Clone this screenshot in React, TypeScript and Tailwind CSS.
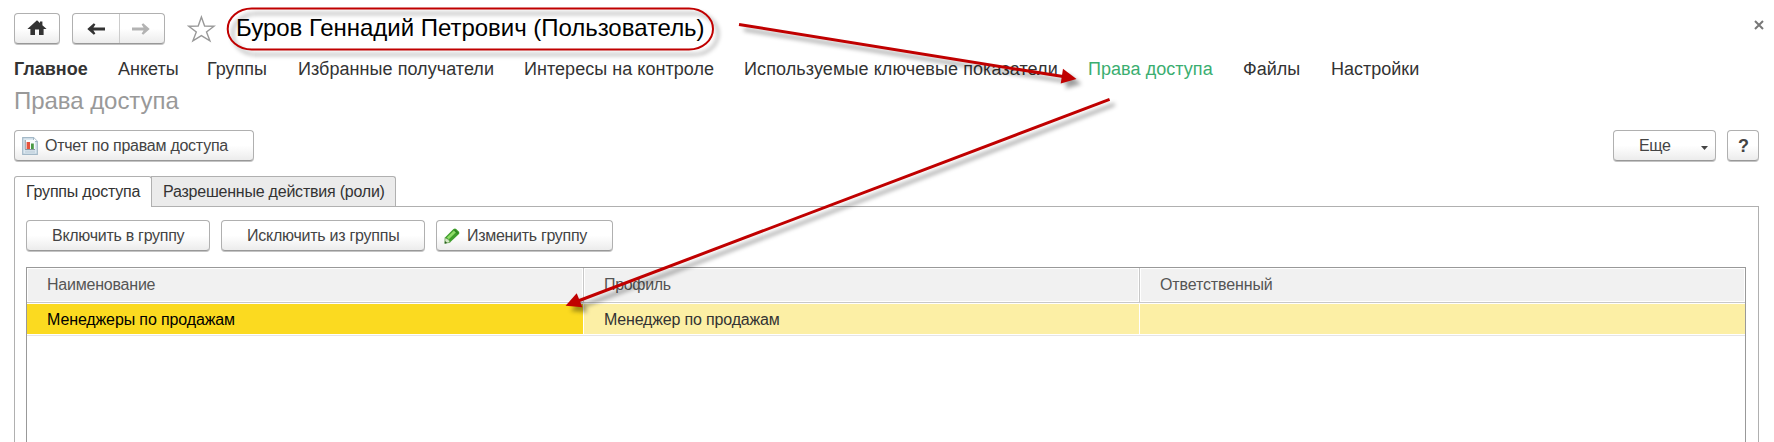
import type { ReactNode } from 'react';

const btn =
  'flex shrink-0 items-center rounded-[4px] border border-[#b0b0b0] border-b-[#989898] bg-linear-to-b from-white from-50% to-[#ececec] text-[#444] shadow-[0_1px_0_#c4c4c4]';

function Button({ className, children }: { className: string; children: ReactNode }) {
  return <button className={`${btn} h-[31px] ${className}`}>{children}</button>;
}

const menu = [
  { label: 'Главное', cls: 'w-[104px] font-bold' },
  { label: 'Анкеты', cls: 'w-[89px]' },
  { label: 'Группы', cls: 'w-[91px]' },
  { label: 'Избранные получатели', cls: 'w-[226px] tracking-[0.05px]' },
  { label: 'Интересы на контроле', cls: 'w-[220px] tracking-[0.04px]' },
  { label: 'Используемые ключевые показатели', cls: 'w-[344px] tracking-[0.1px]' },
  { label: 'Права доступа', cls: 'w-[155px] tracking-[0.05px] text-[#3aae70]' },
  { label: 'Файлы', cls: 'w-[88px]' },
  { label: 'Настройки', cls: 'w-[100px]' },
];

function HomeIcon() {
  return (
    <svg className="-mt-[2px]" width="20" height="16" viewBox="0 0 20 16" fill="#333">
      <path d="M10 0.3 L13 3 V1.5 H15.4 V5.2 L19.6 9 H16.6 V15 H12 V9.5 H8 V15 H3.4 V9 H0.4 Z" />
    </svg>
  );
}

function ArrowIcon({ className }: { className: string }) {
  return (
    <svg className={className} width="18" height="14" viewBox="0 0 18 14">
      <path d="M6.8 1.2 L0.3 7 L6.8 12.8 L8.4 11.4 L6.4 8.5 H18 V5.5 H6.4 L8.4 2.6 Z" fill="currentColor" />
    </svg>
  );
}

function ReportIcon() {
  return (
    <svg width="16" height="18" viewBox="0 0 16 18">
      <path d="M0.7 0.7 H11.5 L15.3 4.5 V17.3 H0.7 Z" fill="#dce8f1" stroke="#a3b8c7" strokeWidth="1.2" />
      <path d="M11.5 0.7 V4.5 H15.3" fill="#fff" stroke="#a3b8c7" strokeWidth="1" />
      <rect x="2.5" y="3" width="10.5" height="10" fill="#f8fbfd" />
      <path d="M3.2 3 V12.6 H13" fill="none" stroke="#7f8e99" strokeWidth="1" />
      <rect x="4.6" y="5" width="3.4" height="7" fill="#e5533d" />
      <rect x="9" y="6.5" width="2.8" height="5.5" fill="#4a9a45" />
      <path d="M3 15 H13" stroke="#b6c7d3" strokeWidth="1" />
    </svg>
  );
}

function PencilIcon() {
  return (
    <svg width="16" height="16" viewBox="0 0 16 16">
      <path d="M1 9.5 L9.5 1 Q11 0 12.2 1 L15 3.8 Q15.8 5 15 6 L6.2 14.3 L0.8 15.4 Z" fill="#3f9e2c" />
      <path d="M2.8 9.5 L10 2.4 L12 4.2 L4.8 11.3 Z" fill="#8fdc68" />
      <path d="M10 2.4 L11 1.4 L14.5 5 L13.4 6 Z" fill="#2f8424" />
      <path d="M1 9.8 L0.8 15.4 L6 14.3 L4.6 11.6 Z" fill="#d4e8c4" stroke="#5a9a48" strokeWidth="0.6" />
      <path d="M0.8 15.4 L1 13 L3.2 14.9 Z" fill="#2a5a22" />
    </svg>
  );
}

function Annotations() {
  return (
    <svg
      className="pointer-events-none absolute top-0 left-0 drop-shadow-[5px_5px_2px_rgba(0,0,0,0.38)]"
      width="1774"
      height="442"
      viewBox="0 0 1774 442"
      fill="none"
      stroke="#c00000"
    >
      <rect x="227.7" y="8.5" width="485.3" height="41" rx="24" ry="20.5" strokeWidth="2" />
      <path d="M739 24.5 L1063 76.6" strokeWidth="3" />
      <path d="M1063 68.7 L1076.5 79 L1060.7 83.6 Z" fill="#c00000" stroke="none" />
      <path d="M1109.6 99.3 L578 301" strokeWidth="3" />
      <path d="M576.7 293.3 L565.6 305.8 L582.4 307.3 Z" fill="#c00000" stroke="none" />
    </svg>
  );
}

export default function App() {
  return (
    <div className="relative flex h-[442px] w-[1774px] flex-col overflow-hidden bg-white font-['Liberation_Sans',Arial,sans-serif] text-[16px] leading-none whitespace-nowrap text-[#333]">
      <header className="flex h-[55px] items-start pt-[13px] pl-[14px]">
        <Button className="w-[46px] justify-center">
          <HomeIcon />
        </Button>
        <div className={`${btn} ml-[12px] h-[31px] w-[93px]`}>
          <button className="flex h-full w-[47px] items-center justify-center border-r border-[#ccc]">
            <ArrowIcon className="text-[#333]" />
          </button>
          <button className="flex h-full flex-1 items-center justify-center pr-[3px]">
            <ArrowIcon className="rotate-180 text-[#b3b3b3]" />
          </button>
        </div>
        <svg className="mt-[2px] ml-[22px] shrink-0" width="29" height="28" viewBox="0 0 29 28">
          <path
            d="M14.4 2 L17.6 11 L27 11.2 L19.5 16.9 L22.9 25.8 L14.4 20.6 L5.9 25.8 L9.3 16.9 L1.8 11.2 L11.2 11 Z"
            fill="#fff"
            stroke="#999"
            strokeWidth="1.4"
          />
        </svg>
        <h1 className="ml-[20px] text-[24px] leading-[30px] tracking-[-0.03px] text-black">
          Буров Геннадий Петрович (Пользователь)
        </h1>
        <svg className="mt-[7px] mr-[10px] ml-auto" width="10" height="10" viewBox="0 0 10 10">
          <path d="M1 1 L9 9 M9 1 L1 9" stroke="#777" strokeWidth="2" />
        </svg>
      </header>

      <nav className="flex h-[28px] items-center pl-[14px] text-[18px]">
        {menu.map((m) => (
          <a key={m.label} className={`shrink-0 ${m.cls}`}>
            {m.label}
          </a>
        ))}
      </nav>

      <h2 className="flex h-[35px] items-center pl-[14px] text-[24px] tracking-[-0.05px] text-[#999]">Права доступа</h2>

      <div className="mt-[12px] flex pr-[15px] pl-[14px]">
        <Button className="w-[240px] pl-[7px]">
          <ReportIcon />
          <span className="ml-[7px] tracking-[-0.25px]">Отчет по правам доступа</span>
        </Button>
        <Button className="ml-auto w-[103px] pl-[25px]">
          <span className="tracking-[-0.3px]">Еще</span>
          <svg className="mt-[5px] ml-[30px]" width="7" height="4" viewBox="0 0 7 4">
            <path d="M0 0 H7 L3.5 4 Z" fill="#444" />
          </svg>
        </Button>
        <Button className="ml-[11px] w-[32px] justify-center pl-px text-[18px] font-bold">?</Button>
      </div>

      <div className="mt-[15px] flex h-[30px] pl-[14px]">
        <div className="z-10 -mb-px flex h-[31px] w-[138px] items-center rounded-t-[3px] border border-b-0 border-[#b0b0b0] bg-white pl-[11px] tracking-[-0.2px]">
          Группы доступа
        </div>
        <div className="-ml-px flex w-[245px] items-center rounded-tr-[3px] border border-b-0 border-[#b0b0b0] bg-[#ebebeb] pl-[11px] tracking-[-0.22px]">
          Разрешенные действия (роли)
        </div>
      </div>

      <main className="mr-[15px] ml-[14px] flex flex-1 flex-col border border-b-0 border-[#b0b0b0] px-[11px] pt-[13px]">
        <div className="flex gap-[11px]">
          <Button className="w-[184px] pl-[25px] tracking-[-0.28px]">Включить в группу</Button>
          <Button className="w-[204px] pl-[25px] tracking-[-0.25px]">Исключить из группы</Button>
          <Button className="w-[177px] pl-[7px]">
            <PencilIcon />
            <span className="ml-[7px] tracking-[-0.3px]">Изменить группу</span>
          </Button>
        </div>

        <div className="mt-[16px] mr-px flex flex-1 flex-col border border-b-0 border-[#999]">
          <div className="flex h-[35px] border-b border-[#c8c8c8] text-[#555]">
            <div className="flex w-[557px] border-r border-[#c8c8c8] p-px">
              <span className="flex flex-1 items-center bg-[#f1f1f1] pl-[19px] tracking-[-0.22px]">Наименование</span>
            </div>
            <div className="flex w-[556px] border-r border-[#c8c8c8] p-px">
              <span className="flex flex-1 items-center bg-[#f1f1f1] pl-[19px] tracking-[-0.32px]">Профиль</span>
            </div>
            <div className="flex flex-1 p-px">
              <span className="flex flex-1 items-center bg-[#f1f1f1] pl-[19px] tracking-[-0.13px]">Ответственный</span>
            </div>
          </div>
          <div className="flex h-[33px] border-b border-[#e5e5e5] py-px">
            <div className="flex w-[557px] items-center border-r border-white bg-[#fbda20] pt-[2px] pl-[20px] tracking-[-0.12px] text-black">
              Менеджеры по продажам
            </div>
            <div className="flex w-[556px] items-center border-r border-white bg-[#fcefa5] pt-[2px] pl-[20px] tracking-[-0.17px]">
              Менеджер по продажам
            </div>
            <div className="flex-1 bg-[#fcefa5]" />
          </div>
        </div>
      </main>

      <Annotations />
    </div>
  );
}
